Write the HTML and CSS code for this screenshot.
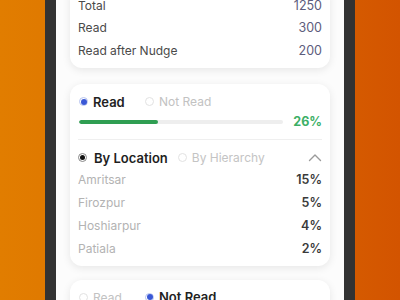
FILE: index.html
```html
<!DOCTYPE html>
<html>
<head>
<meta charset="utf-8">
<link rel="stylesheet" href="styles.css">
</head>
<body>
<div class="phone">
  <div class="screen">
    <div class="card summary">
      <div class="srow"><span class="slabel">Total</span><span class="sval">1250</span></div>
      <div class="srow"><span class="slabel">Read</span><span class="sval">300</span></div>
      <div class="srow"><span class="slabel">Read after Nudge</span><span class="sval">200</span></div>
    </div>

    <div class="card detail">
      <div class="radios">
        <span class="opt on"><span class="radio blue"></span>Read</span>
        <span class="opt off"><span class="radio empty"></span>Not Read</span>
      </div>
      <div class="progress">
        <div class="bar"><div class="fill" style="width:38.5%"></div></div>
        <span class="pct">26%</span>
      </div>
      <div class="divider"></div>
      <div class="group">
        <span class="gopt on"><span class="radio dark"></span>By Location</span>
        <span class="gopt off"><span class="radio empty"></span>By Hierarchy</span>
        <svg class="chev" width="14" height="9" viewBox="0 0 14 9"><polyline points="1.5,7.5 7,2 12.5,7.5" fill="none" stroke="#9a9a9a" stroke-width="1.4" stroke-linecap="round" stroke-linejoin="round"/></svg>
      </div>
      <div class="lrow"><span class="llabel">Amritsar</span><span class="lval">15%</span></div>
      <div class="lrow"><span class="llabel">Firozpur</span><span class="lval">5%</span></div>
      <div class="lrow"><span class="llabel">Hoshiarpur</span><span class="lval">4%</span></div>
      <div class="lrow"><span class="llabel">Patiala</span><span class="lval">2%</span></div>
    </div>

    <div class="card detail third">
      <div class="radios">
        <span class="opt off"><span class="radio empty"></span>Read</span>
        <span class="opt on"><span class="radio blue"></span>Not Read</span>
      </div>
    </div>
  </div>
</div>
</body>
</html>
```
FILE: styles.css
```css
html, body {
  margin: 0;
  padding: 0;
}
body {
  width: 400px;
  height: 300px;
  overflow: hidden;
  background: linear-gradient(90deg, #e17d00 0%, #dc6e00 50%, #d35400 100%);
  font-family: Inter, "Noto Sans", sans-serif;
}
.phone {
  margin: 0 45px;
  height: 300px;
  background: #333333;
  padding: 0 11px;
}
.screen {
  height: 300px;
  background: #fcfcfc;
  padding: 0 14px;
  overflow: hidden;
}
.card {
  background: #ffffff;
  border-radius: 12px;
  box-shadow: 0 2px 8px rgba(0, 0, 0, 0.09);
  padding: 0 8px;
}
.summary {
  margin-top: -14px;
  padding-top: 8px;
  padding-bottom: 6px;
}
.srow {
  display: flex;
  justify-content: space-between;
  align-items: center;
  height: 22.5px;
  font-size: 12px;
}
.slabel {
  color: #4a4a4a;
}
.sval {
  color: #5c5c7c;
  font-size: 12.5px;
}
.detail {
  margin-top: 16px;
  padding-top: 10px;
  padding-bottom: 6px;
}
.third {
  margin-top: 14px;
  padding-top: 9px;
}
.radios {
  display: flex;
  align-items: center;
  height: 16px;
  padding-left: 1px;
}
.opt {
  display: flex;
  align-items: center;
  font-size: 12.5px;
}
.opt.on {
  color: #222;
  font-weight: 600;
  font-size: 13px;
}
.opt.off {
  color: #c2c2c2;
  font-size: 12px;
}
.radios .opt:first-child {
  width: 66px;
}
.radio {
  box-sizing: border-box;
  width: 9px;
  height: 9px;
  border-radius: 50%;
  margin-right: 5px;
  display: inline-flex;
  align-items: center;
  justify-content: center;
  flex: none;
}
.radio.blue {
  border: 1px solid #b6c3ef;
}
.radio.blue::after {
  content: "";
  width: 6px;
  height: 6px;
  border-radius: 50%;
  background: #3a58d6;
}
.radio.dark {
  border: 1px solid #888;
}
.radio.dark::after {
  content: "";
  width: 5px;
  height: 5px;
  border-radius: 50%;
  background: #111;
}
.radio.empty {
  border: 1px solid #e2e2e2;
}
.progress {
  display: flex;
  align-items: center;
  height: 14px;
  margin-top: 5px;
  padding-left: 1px;
}
.bar {
  flex: 1;
  height: 4px;
  border-radius: 2px;
  background: #eeeeee;
  margin-right: 10px;
  overflow: hidden;
}
.fill {
  height: 100%;
  background: #2f9e52;
  border-radius: 2px;
}
.pct {
  color: #3caf66;
  font-weight: 700;
  font-size: 12.5px;
}
.divider {
  height: 1px;
  background: #efefef;
  margin-top: 10px;
}
.group {
  display: flex;
  align-items: center;
  height: 18px;
  margin-top: 9px;
}
.gopt {
  display: flex;
  align-items: center;
}
.gopt.on {
  font-size: 13px;
  font-weight: 600;
  color: #1e1e1e;
  margin-right: 10px;
}
.gopt.on .radio {
  margin-right: 7px;
}
.gopt.off {
  font-size: 12px;
  color: #c4c4c4;
}
.chev {
  margin-left: auto;
}
.lrow {
  display: flex;
  justify-content: space-between;
  align-items: center;
  height: 23px;
  font-size: 12px;
}
.group + .lrow {
  margin-top: 1.5px;
}
.llabel {
  color: #b3b3b3;
}
.lval {
  color: #3a3a3a;
  font-weight: 600;
  font-size: 12.5px;
}
```
